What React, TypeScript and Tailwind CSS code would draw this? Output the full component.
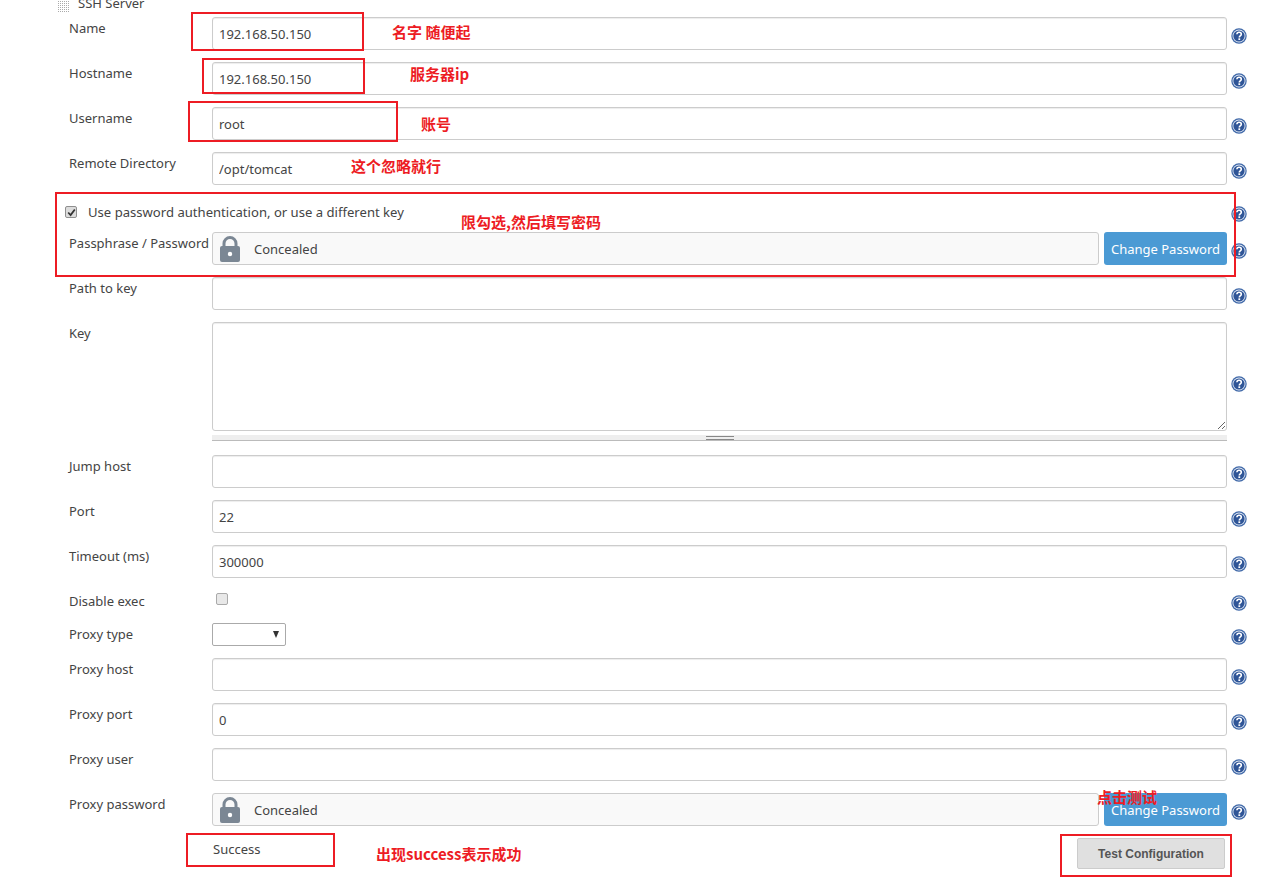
import React from "react";

const font = { fontFamily: '"Noto Sans", "Liberation Sans", sans-serif' };

function Help() {
  return (
    <svg width="16" height="16" viewBox="0 0 16 16" className="block">
      <circle cx="8" cy="8" r="7.7" fill="#3f68a8" />
      <circle cx="8" cy="8" r="6.5" fill="#dfe7f3" />
      <circle cx="8" cy="8" r="5.6" fill="#2f5597" />
      <path d="M5.9 6.2C6 4.9 6.9 4.3 8.1 4.3c1.3 0 2.2.8 2.2 1.9 0 1.7-2 1.7-2 3.2" fill="none" stroke="#fff" strokeWidth="1.6" />
      <rect x="7.4" y="10.3" width="1.8" height="1.7" fill="#fff" />
    </svg>
  );
}

function HelpCol({ small }: { small?: boolean }) {
  return (
    <div className={`w-[16px] ml-[4px] shrink-0 self-stretch flex items-center ${small ? "pt-[4px]" : "pt-[5px]"}`}>
      <Help />
    </div>
  );
}

function Label({ children }: { children?: React.ReactNode }) {
  return (
    <div className="w-[143px] shrink-0 self-start pt-[1px] text-[13px] leading-[20px] text-[#444] whitespace-nowrap">
      {children}
    </div>
  );
}

function TextRow({ label, value = "", mt = "mt-[12px]" }: { label: string; value?: string; mt?: string }) {
  return (
    <div className={`flex items-stretch h-[33px] ${mt}`}>
      <Label>{label}</Label>
      <input
        readOnly
        defaultValue={value}
        className="flex-1 min-w-0 h-[33px] rounded-[3px] border border-[#ccc] bg-white px-[6px] pt-[1px] text-[13px] text-[#444] shadow-[inset_0_1px_1px_rgba(0,0,0,0.075)] outline-none"
      />
      <HelpCol />
    </div>
  );
}

function Lock() {
  return (
    <svg width="22" height="26" viewBox="0 0 22 26" className="block">
      <path d="M5 11V7.5a6 6 0 0 1 12 0V11" fill="none" stroke="#7b8794" strokeWidth="3" />
      <rect x="1" y="10" width="20" height="16" rx="2" fill="#7b8794" />
      <circle cx="11" cy="18" r="2.2" fill="#fff" />
    </svg>
  );
}

function PasswordRow({ label, mt }: { label: string; mt: string }) {
  return (
    <div className={`flex items-stretch h-[33px] ${mt}`}>
      <Label>{label}</Label>
      <div className="flex-1 min-w-0 flex gap-[5px]">
        <div className="flex-1 flex items-center rounded-[3px] border border-[#ccc] bg-[#f9f9f9] pl-[6px]">
          <Lock />
          <span className="ml-[13px] pt-[2px] text-[13px] text-[#444]">Concealed</span>
        </div>
        <button className="w-[123px] pt-[2px] rounded-[3px] bg-[#4b9ad4] text-[13px] text-white">Change Password</button>
      </div>
      <HelpCol />
    </div>
  );
}

function Box({ className }: { className: string }) {
  return <div className={`absolute border-2 border-[#ed1c24] ${className}`} />;
}

function Note({ className, children }: { className: string; children: React.ReactNode }) {
  return (
    <div
      className={`absolute text-[15px] leading-[20px] font-bold text-[#ed1c24] whitespace-nowrap ${className}`}
      style={{ fontFamily: '"Noto Sans CJK SC", "Noto Sans", sans-serif' }}
    >
      {children}
    </div>
  );
}

export default function App() {
  return (
    <div className="relative w-[1267px] h-[879px] overflow-hidden bg-white" style={font}>
      <div className="pl-[69px] pr-[20px]">
        <div className="h-[5px] -ml-[11px] flex items-center">
          <svg width="12" height="14" className="shrink-0 mt-[6px]">
            <defs>
              <pattern id="g" width="2" height="2" patternUnits="userSpaceOnUse">
                <rect width="1" height="1" fill="#aaa" />
              </pattern>
            </defs>
            <rect width="12" height="14" fill="url(#g)" />
          </svg>
          <span className="ml-[8px] mt-[1px] text-[13px] leading-[20px] text-[#444]">SSH Server</span>
        </div>

        <TextRow label="Name" value="192.168.50.150" />
        <TextRow label="Hostname" value="192.168.50.150" />
        <TextRow label="Username" value="root" />
        <TextRow label="Remote Directory" value="/opt/tomcat" />

        <div className="flex items-center h-[22px] mt-[16px]">
          <div className="-ml-[4px] w-[12px] h-[12px] rounded-[2px] border border-[#8f8f8f] bg-[#dcdcdc] flex items-center justify-center shrink-0">
            <svg width="9" height="9" viewBox="0 0 9 9">
              <path d="M1.2 4.5 3.6 7 7.8 1.5" fill="none" stroke="#333" strokeWidth="1.8" />
            </svg>
          </div>
          <span className="ml-[11px] pt-[2px] text-[13.1px] text-[#444] flex-1">Use password authentication, or use a different key</span>
          <HelpCol small />
        </div>

        <PasswordRow label="Passphrase / Password" mt="mt-[9px]" />
        <TextRow label="Path to key" />

        <div className="flex items-stretch mt-[12px]">
          <Label>Key</Label>
          <div className="flex-1 min-w-0 flex flex-col">
            <textarea
              readOnly
              className="block w-full h-[109px] rounded-[3px] border border-[#ccc] bg-white shadow-[inset_0_1px_1px_rgba(0,0,0,0.075)] outline-none"
            />
            <div className="mt-[4px] h-[6px] bg-[#eee] border-b border-[#bbb] flex justify-center">
              <div className="w-[28px] h-[4px] mt-[1px] border-y border-[#888]" />
            </div>
          </div>
          <HelpCol />
        </div>

        <TextRow label="Jump host" mt="mt-[14px]" />
        <TextRow label="Port" value="22" />
        <TextRow label="Timeout (ms)" value="300000" />

        <div className="flex items-center h-[22px] mt-[12px]">
          <Label>Disable exec</Label>
          <div className="flex-1 min-w-0">
            <div className="ml-[4px] -mt-[4px] w-[12px] h-[12px] rounded-[2px] border border-[#aaa] bg-[#e8e8e8]" />
          </div>
          <HelpCol small />
        </div>

        <div className="flex items-stretch h-[23px] mt-[11px]">
          <Label>Proxy type</Label>
          <div className="flex-1 min-w-0">
            <div className="relative w-[74px] h-[23px]">
              <select className="appearance-none w-full h-full rounded-[2px] border border-[#aaa] bg-white outline-none" />
              <span className="absolute right-[7px] top-[8px] w-0 h-0 border-x-[3.5px] border-x-transparent border-t-[7px] border-t-[#333]" />
            </div>
          </div>
          <HelpCol />
        </div>

        <TextRow label="Proxy host" />
        <TextRow label="Proxy port" value="0" />
        <TextRow label="Proxy user" />
        <PasswordRow label="Proxy password" mt="mt-[12px]" />

        <div className="flex items-center h-[31px] mt-[12px]">
          <div className="ml-[144px] -mt-[7px] text-[13px] text-[#444] flex-1">Success</div>
          <button
            className="w-[148px] h-[31px] mr-[22px] rounded-[2px] border border-[#ccc] bg-[#e0e0e0] text-[12px] font-bold text-[#555]"
            style={{ fontFamily: '"Liberation Sans", sans-serif' }}
          >
            Test Configuration
          </button>
        </div>
      </div>

      <Box className="left-[191px] top-[12px] w-[173px] h-[39px]" />
      <Box className="left-[202px] top-[58px] w-[163px] h-[36px]" />
      <Box className="left-[188px] top-[101px] w-[210px] h-[41px]" />
      <Box className="left-[55px] top-[192px] w-[1181px] h-[85px]" />
      <Box className="left-[186px] top-[833px] w-[149px] h-[34px]" />
      <Box className="left-[1060px] top-[834px] w-[172px] h-[43px]" />

      <Note className="left-[392px] top-[22px]">名字 随便起</Note>
      <Note className="left-[410px] top-[64px]">服务器ip</Note>
      <Note className="left-[421px] top-[114px]">账号</Note>
      <Note className="left-[351px] top-[156px]">这个忽略就行</Note>
      <Note className="left-[461px] top-[212px]">限勾选,然后填写密码</Note>
      <Note className="left-[1097px] top-[787px]">点击测试</Note>
      <Note className="left-[376px] top-[844px] text-[14.5px]">出现success表示成功</Note>
    </div>
  );
}
